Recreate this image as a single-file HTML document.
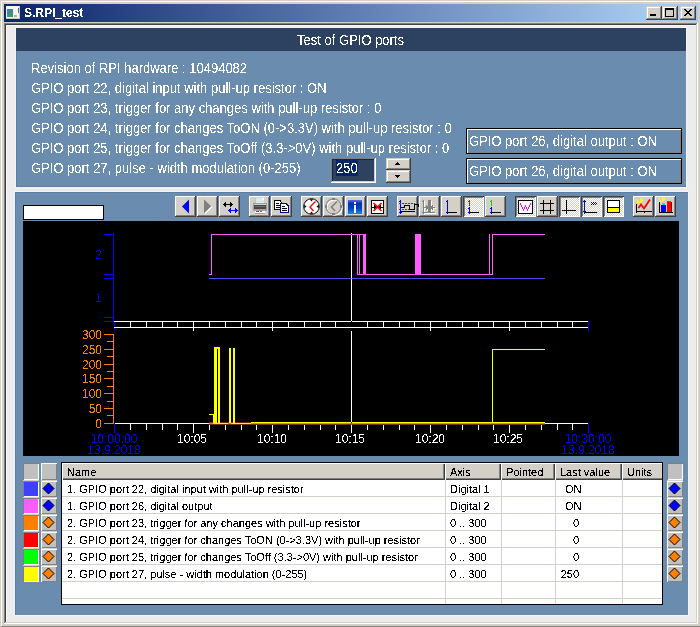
<!DOCTYPE html>
<html><head><meta charset="utf-8">
<style>
html,body{margin:0;padding:0;width:700px;height:627px;overflow:hidden;background:#d4d0c8;}
body{position:relative;font-family:"Liberation Sans",sans-serif;}
.a{position:absolute;}
.t{position:absolute;white-space:nowrap;line-height:20px;filter:url(#crisp);}
.btn{background:#d4d0c8;box-shadow:inset -1px -1px #404040,inset 1px 1px #fff,inset -2px -2px #808080;}
.obox{box-sizing:border-box;border:1px solid #000;box-shadow:inset 1px 1px #fff,inset -1px -1px #808080;}
.pbtn{background-color:#e8e6e2;background-image:repeating-conic-gradient(#fff 0 25%,#d4d0c8 0 50%);background-size:2px 2px;box-shadow:inset 1px 1px #404040,inset -1px -1px #fff,inset 2px 2px #808080;}
.cl{font-size:12px;line-height:20px;}
.sunk{box-sizing:border-box;box-shadow:inset 1px 1px #808080,inset -1px -1px #fff;}
.rais{box-sizing:border-box;box-shadow:inset 1px 1px #fff,inset -1px -1px #808080;}
.hcell{box-sizing:border-box;background:#d4d0c8;box-shadow:inset 1px 1px #fff,inset -1px -1px #404040,inset -2px -2px #808080;}
.tb{font-size:11px;line-height:17px;color:#000;margin-top:1px;margin-left:-1px;filter:url(#crisp45);}
.cbtn{background:#d4d0c8;box-shadow:inset -1px -1px #404040,inset 1px 1px #d4d0c8,inset -2px -2px #808080,inset 2px 2px #fff;}
.sx{display:inline-block;transform:scaleX(0.9286);}
</style></head><body><svg width="0" height="0" style="position:absolute"><filter id="crisp" x="0" y="0" width="100%" height="100%"><feComponentTransfer><feFuncA type="discrete" tableValues="0 1"/></feComponentTransfer></filter><filter id="crisp45" x="0" y="0" width="100%" height="100%"><feComponentTransfer><feFuncA type="discrete" tableValues="0 0 0 0 0 0 0 0 0 1 1 1 1 1 1 1 1 1 1 1"/></feComponentTransfer></filter></svg>
<!-- window frame -->
<div class="a" style="left:1px;top:1px;width:699px;height:1px;background:#fff"></div>
<div class="a" style="left:1px;top:1px;width:1px;height:625px;background:#fff"></div>
<div class="a" style="left:1px;top:626px;width:699px;height:1px;background:#808080"></div>
<!-- title bar -->
<div class="a" style="left:4px;top:4px;width:694px;height:18px;background:linear-gradient(to right,#0a246a,#a6caf0 93%)"></div>
<div class="t" style="left:24px;top:3px;font-size:12px;font-weight:bold;color:#fff;filter:url(#crisp45)">S.RPI_test</div>
<!-- client edge -->
<div class="a" style="left:4px;top:23px;width:694px;height:601px;background:#fff"></div>
<div class="a" style="left:4px;top:23px;width:693px;height:600px;background:#808080"></div>
<div class="a" style="left:5px;top:24px;width:692px;height:599px;background:#d4d0c8"></div>
<div class="a" style="left:5px;top:24px;width:691px;height:598px;background:#404040"></div>
<div class="a" style="left:6px;top:25px;width:690px;height:597px;background:#f8f8f8"></div>
<div class="a" style="left:7px;top:26px;width:689px;height:596px;background:#ececec"></div>

<!-- panel 1 -->
<div class="a" style="left:16px;top:28px;width:670px;height:159px;background:#698caf;box-shadow:inset 1px -1px #5a7ea6,0 0 0 1px #f6f4f2"></div>
<div class="a" style="left:16px;top:28px;width:670px;height:23px;background:#2c4260"></div>
<div class="t" style="left:16px;width:670px;text-align:center;top:30px;font-size:14px;color:#fff"><span class="sx" style="transform-origin:50% 0">Test of GPIO ports</span></div>
<div class="t" style="left:31px;top:58px;font-size:14px;color:#fff"><span class="sx" style="transform-origin:0 0">Revision of RPI hardware : 10494082</span></div>
<div class="t" style="left:31px;top:78px;font-size:14px;color:#fff"><span class="sx" style="transform-origin:0 0">GPIO port 22, digital input with pull-up resistor : ON</span></div>
<div class="t" style="left:31px;top:98px;font-size:14px;color:#fff"><span class="sx" style="transform-origin:0 0">GPIO port 23, trigger for any changes with pull-up resistor : 0</span></div>
<div class="t" style="left:31px;top:118px;font-size:14px;color:#fff"><span class="sx" style="transform-origin:0 0">GPIO port 24, trigger for changes ToON (0-&gt;3.3V) with pull-up resistor : 0</span></div>
<div class="t" style="left:31px;top:138px;font-size:14px;color:#fff"><span class="sx" style="transform-origin:0 0">GPIO port 25, trigger for changes ToOff (3.3-&gt;0V) with pull-up resistor : 0</span></div>
<div class="t" style="left:31px;top:158px;font-size:14px;color:#fff"><span class="sx" style="transform-origin:0 0">GPIO port 27, pulse - width modulation (0-255)</span></div>


<!-- title icon -->
<div class="a" style="left:6px;top:6px;width:14px;height:13px;background:#f4f4f0;box-shadow:inset -1px -1px #c8c8c0"></div>
<div class="a" style="left:7px;top:9px;width:6px;height:8px;background:linear-gradient(#4a7ab0,#3aa060)"></div>
<div class="a" style="left:18px;top:8px;width:1px;height:5px;background:linear-gradient(#3060c0,#30a050)"></div>
<div class="a" style="left:14px;top:15px;width:3px;height:2px;background:#b0b0b0"></div>
<!-- title buttons -->
<div class="a cbtn" style="left:646px;top:6px;width:16px;height:14px"><div class="a" style="left:4px;top:8px;width:6px;height:2px;background:#000"></div></div>
<div class="a cbtn" style="left:662px;top:6px;width:16px;height:14px"><div class="a" style="left:3px;top:2px;width:9px;height:9px;box-sizing:border-box;border:1px solid #000;border-top-width:2px"></div></div>
<div class="a cbtn" style="left:680px;top:6px;width:16px;height:14px"><svg class="a" style="left:0;top:0" width="16" height="14" shape-rendering="crispEdges"><path d="M4 3h2v1h1v1h2v-1h1v-1h2v1h-1v1h-1v1h-1v1h1v1h1v1h1v1h-2v-1h-1v-1h-2v1h-1v1h-2v-1h1v-1h1v-1h1v-1h-1v-1h-1v-1h-1z" fill="#000"/></svg></div>
<!-- right boxes -->
<div class="a obox" style="left:466px;top:128px;width:216px;height:26px"></div>
<div class="t" style="left:469px;top:131px;font-size:14px;color:#fff"><span class="sx" style="transform-origin:0 0">GPIO port 26, digital output : ON</span></div>
<div class="a obox" style="left:466px;top:158px;width:216px;height:26px"></div>
<div class="t" style="left:469px;top:161px;font-size:14px;color:#fff"><span class="sx" style="transform-origin:0 0">GPIO port 26, digital output : ON</span></div>
<!-- spin edit -->
<div class="a" style="left:331px;top:158px;width:45px;height:25px;background:#fff"></div>
<div class="a" style="left:331px;top:158px;width:44px;height:24px;background:#808080"></div>
<div class="a" style="left:332px;top:159px;width:43px;height:23px;background:#d4d0c8"></div>
<div class="a" style="left:332px;top:159px;width:42px;height:22px;background:#1c2438"></div>
<div class="a" style="left:333px;top:160px;width:41px;height:21px;background:#2c4260"></div>
<div class="a" style="left:336px;top:160px;width:22px;height:16px;background:#0a246a"></div>
<div class="t" style="left:336px;top:158px;font-size:14px;line-height:20px;color:#fff"><span class="sx" style="transform-origin:0 0">250</span></div>
<div class="a cbtn" style="left:386px;top:158px;width:25px;height:12px"></div>
<div class="a cbtn" style="left:386px;top:170px;width:25px;height:13px"></div>
<svg class="a" style="left:386px;top:158px" width="25" height="25" shape-rendering="crispEdges"><rect x="11" y="4" width="1" height="1"/><rect x="10" y="5" width="3" height="1"/><rect x="9" y="6" width="5" height="1"/><rect x="9" y="17" width="5" height="1"/><rect x="10" y="18" width="3" height="1"/><rect x="11" y="19" width="1" height="1"/></svg>
<!-- panel 2 -->
<div class="a" style="left:15px;top:192px;width:673px;height:423px;background:#698caf;box-shadow:inset 1px 1px #5a7ea6,0 0 0 1px #f6f4f2"></div>
<div class="a btn" style="left:175px;top:196px;width:21px;height:21px"></div>
<div class="a btn" style="left:197px;top:196px;width:21px;height:21px"></div>
<div class="a btn" style="left:219px;top:196px;width:21px;height:21px"></div>
<div class="a btn" style="left:249px;top:196px;width:21px;height:21px"></div>
<div class="a btn" style="left:271px;top:196px;width:21px;height:21px"></div>
<div class="a btn" style="left:301px;top:196px;width:21px;height:21px"></div>
<div class="a btn" style="left:323px;top:196px;width:21px;height:21px"></div>
<div class="a btn" style="left:345px;top:196px;width:21px;height:21px"></div>
<div class="a btn" style="left:367px;top:196px;width:21px;height:21px"></div>
<div class="a btn" style="left:397px;top:196px;width:21px;height:21px"></div>
<div class="a btn" style="left:419px;top:196px;width:21px;height:21px"></div>
<div class="a btn" style="left:441px;top:196px;width:21px;height:21px"></div>
<div class="a pbtn" style="left:463px;top:196px;width:21px;height:21px"></div>
<div class="a btn" style="left:485px;top:196px;width:21px;height:21px"></div>
<div class="a pbtn" style="left:515px;top:196px;width:21px;height:21px"></div>
<div class="a btn" style="left:537px;top:196px;width:21px;height:21px"></div>
<div class="a pbtn" style="left:559px;top:196px;width:21px;height:21px"></div>
<div class="a pbtn" style="left:581px;top:196px;width:21px;height:21px"></div>
<div class="a pbtn" style="left:603px;top:196px;width:21px;height:21px"></div>
<div class="a btn" style="left:633px;top:196px;width:21px;height:21px"></div>
<div class="a btn" style="left:655px;top:196px;width:21px;height:21px"></div>
<svg class="a" style="left:170px;top:194px" width="510" height="26" viewBox="170 194 510 26" shape-rendering="crispEdges">
<!-- prev -->
<path d="M182 206.5L189 199.5V213.5Z" fill="#0000ff" shape-rendering="geometricPrecision"/>
<!-- next disabled -->
<path d="M204 199.5L211.5 206.5L204 213.5Z" fill="#808080" shape-rendering="geometricPrecision"/>
<path d="M205 213.5L212 206.5" stroke="#fff" stroke-width="1.2" shape-rendering="geometricPrecision"/>
<!-- arrows -->
<rect x="223" y="204" width="10" height="1" fill="#000"/><rect x="224" y="203" width="1" height="3" fill="#000"/><rect x="231" y="203" width="1" height="3" fill="#000"/><rect x="225" y="202" width="1" height="5" fill="#000"/><rect x="230" y="202" width="1" height="5" fill="#000"/>
<rect x="228" y="210" width="10" height="1" fill="#0000ff"/><rect x="229" y="209" width="1" height="3" fill="#0000ff"/><rect x="236" y="209" width="1" height="3" fill="#0000ff"/><rect x="230" y="208" width="1" height="5" fill="#0000ff"/><rect x="235" y="208" width="1" height="5" fill="#0000ff"/>
<!-- printer -->
<rect x="255" y="198" width="9" height="6" fill="#d8ecec"/><rect x="255" y="198" width="1" height="6" fill="#b0c8c8"/><path d="M261 198h3v3z" fill="#fff"/>
<rect x="253" y="203" width="14" height="8" fill="#a0a0a0"/>
<rect x="254" y="204" width="12" height="1" fill="#d0d0d0"/>
<rect x="254" y="205" width="12" height="4" fill="#484848"/>
<rect x="255" y="206" width="10" height="1" fill="#707070"/>
<rect x="252" y="205" width="1" height="5" fill="#c8c8c8"/><rect x="267" y="205" width="1" height="5" fill="#c8c8c8"/>
<rect x="266" y="207" width="1" height="1" fill="#20e020"/>
<rect x="255" y="211" width="10" height="2" fill="#ffffff"/><rect x="255" y="213" width="10" height="1" fill="#a0a0a0"/>
<rect x="256" y="211" width="3" height="1" fill="#2070e0"/><rect x="260" y="211" width="2" height="1" fill="#20a060"/>
<!-- copy -->
<rect x="274" y="200" width="7" height="10" fill="#000"/><rect x="281" y="202" width="1" height="8" fill="#000"/><rect x="280" y="201" width="1" height="1" fill="#000"/>
<rect x="275" y="201" width="5" height="8" fill="#fff"/><rect x="280" y="202" width="1" height="7" fill="#fff"/>
<rect x="276" y="203" width="3" height="1" fill="#000"/><rect x="276" y="205" width="4" height="1" fill="#000"/><rect x="276" y="207" width="4" height="1" fill="#000"/>
<rect x="280" y="203" width="7" height="10" fill="#000080"/><rect x="287" y="205" width="2" height="8" fill="#000080"/><rect x="287" y="204" width="1" height="1" fill="#000080"/>
<rect x="281" y="204" width="5" height="8" fill="#fff"/><rect x="286" y="205" width="1" height="7" fill="#fff"/><rect x="287" y="206" width="1" height="6" fill="#fff"/>
<rect x="282" y="206" width="3" height="1" fill="#000"/><rect x="282" y="208" width="5" height="1" fill="#000"/><rect x="282" y="210" width="5" height="1" fill="#000"/>
<!-- clock -->
<g shape-rendering="geometricPrecision">
<circle cx="311.5" cy="206.5" r="7.8" fill="#fff" stroke="#000" stroke-width="1"/>
<path d="M311.5 201.5l-1.7 -2.3h3.4zM311.5 211.5l-1.7 2.3h3.4zM306.5 206.5l-2.3 -1.7v3.4zM316.5 206.5l2.3 -1.7v3.4z" fill="#000"/>
<path d="M315.5 201.5L310 207L313.5 211" stroke="#ff0000" stroke-width="1.4" fill="none"/>
<circle cx="334.5" cy="207.5" r="7.6" fill="none" stroke="#fff" stroke-width="1.4"/><circle cx="333.5" cy="206.5" r="7.6" fill="none" stroke="#909090" stroke-width="1.4"/>
<path d="M337 201.5L331.5 207L335 211" stroke="#808080" stroke-width="1.6" fill="none"/>
<rect x="332" y="198" width="3" height="2" fill="#808080"/><rect x="332" y="213" width="3" height="2" fill="#808080"/>
<rect x="325" y="205" width="2" height="3" fill="#808080"/><rect x="340" y="205" width="2" height="3" fill="#808080"/>
</g>
<!-- info -->
<defs><linearGradient id="ig" x1="0" y1="0" x2="0" y2="1"><stop offset="0" stop-color="#6070e0"/><stop offset="0.25" stop-color="#0030b0"/><stop offset="0.6" stop-color="#0040c0"/><stop offset="1" stop-color="#0090ff"/></linearGradient></defs>
<rect x="348" y="200" width="14" height="14" fill="url(#ig)"/>
<rect x="354" y="202" width="2" height="2" fill="#fff"/><rect x="354" y="205" width="2" height="8" fill="#fff"/>
<!-- X -->
<rect x="371" y="200" width="13" height="14" fill="#000"/><rect x="372" y="201" width="11" height="12" fill="#fff"/>
<rect x="372" y="207" width="11" height="1" fill="#000"/><path d="M374 204.5v5l3.5 -2.5zM381 204.5v5l-3.5 -2.5z" fill="#000" shape-rendering="geometricPrecision"/><path d="M373.5 203L381.5 211M381.5 203L373.5 211" stroke="#ff0000" stroke-width="1.6" shape-rendering="geometricPrecision"/>

<!-- 397 wave -->
<rect x="400" y="200" width="1" height="14" fill="#0000ff"/><rect x="399" y="201" width="1" height="1" fill="#0000ff"/><rect x="399" y="212" width="3" height="1" fill="#0000ff"/>
<path d="M399 203.5h16M399 209.5h16" stroke="#ff0000" stroke-dasharray="2 1"/>
<rect x="401" y="207" width="3" height="1" fill="#000"/><rect x="404" y="205" width="1" height="3" fill="#000"/><rect x="404" y="205" width="5" height="1" fill="#000"/><rect x="409" y="205" width="1" height="5" fill="#000"/><rect x="409" y="209" width="5" height="1" fill="#000"/><rect x="414" y="204" width="1" height="6" fill="#000"/><rect x="414" y="204" width="4" height="1" fill="#000"/><rect x="418" y="204" width="1" height="3" fill="#000"/>
<rect x="400" y="211" width="15" height="1" fill="#000"/>
<!-- 419 disabled -->
<rect x="424" y="201" width="1" height="14" fill="#ffffff"/><rect x="423" y="202" width="1" height="1" fill="#ffffff"/><rect x="423" y="213" width="3" height="1" fill="#ffffff"/><rect x="424" y="213" width="12" height="1" fill="#ffffff"/><rect x="429" y="201" width="3" height="12" fill="#ffffff"/><rect x="425" y="208" width="4" height="1" fill="#ffffff"/><rect x="432" y="208" width="4" height="1" fill="#ffffff"/><rect x="427" y="206" width="1" height="5" fill="#ffffff"/><rect x="428" y="207" width="1" height="3" fill="#ffffff"/><rect x="433" y="206" width="1" height="5" fill="#ffffff"/><rect x="432" y="207" width="1" height="3" fill="#ffffff"/><rect x="423" y="200" width="1" height="14" fill="#808080"/><rect x="422" y="201" width="1" height="1" fill="#808080"/><rect x="422" y="212" width="3" height="1" fill="#808080"/><rect x="423" y="212" width="12" height="1" fill="#808080"/><rect x="428" y="200" width="3" height="12" fill="#808080"/><rect x="424" y="207" width="4" height="1" fill="#808080"/><rect x="431" y="207" width="4" height="1" fill="#808080"/><rect x="426" y="205" width="1" height="5" fill="#808080"/><rect x="427" y="206" width="1" height="3" fill="#808080"/><rect x="432" y="205" width="1" height="5" fill="#808080"/><rect x="431" y="206" width="1" height="3" fill="#808080"/>
<!-- 441 -->
<rect x="447" y="200" width="1" height="14" fill="#0000ff"/><rect x="446" y="201" width="1" height="1" fill="#0000ff"/><rect x="446" y="212" width="3" height="1" fill="#0000ff"/><rect x="448" y="212" width="9" height="1" fill="#000"/>
<rect x="469" y="200" width="1" height="6" fill="#ff0000"/><rect x="468" y="201" width="1" height="1" fill="#ff0000"/><rect x="469" y="207" width="1" height="7" fill="#0000ff"/><rect x="468" y="208" width="1" height="1" fill="#0000ff"/><rect x="468" y="212" width="3" height="1" fill="#0000ff"/><rect x="470" y="212" width="9" height="1" fill="#000"/>
<rect x="491" y="200" width="1" height="6" fill="#00e000"/><rect x="490" y="201" width="1" height="1" fill="#00e000"/><rect x="491" y="207" width="1" height="7" fill="#0000ff"/><rect x="490" y="208" width="1" height="1" fill="#0000ff"/><rect x="490" y="212" width="3" height="1" fill="#0000ff"/><rect x="492" y="212" width="9" height="1" fill="#000"/>
<!-- W -->
<rect x="518" y="200" width="15" height="14" fill="#000"/><rect x="519" y="201" width="13" height="12" fill="#fff"/>
<path d="M520 203h1v2h1v2h1v2h1v-2h1v-2h1v2h1v2h1v-2h1v-2h1v-2h1v-1h-1v1" fill="none" stroke="none"/>
<rect x="520" y="203" width="1" height="2" fill="#ff00ff"/><rect x="521" y="205" width="1" height="2" fill="#ff00ff"/><rect x="522" y="207" width="1" height="2" fill="#ff00ff"/><rect x="523" y="209" width="1" height="2" fill="#ff00ff"/>
<rect x="524" y="207" width="1" height="2" fill="#ff00ff"/><rect x="525" y="205" width="1" height="2" fill="#ff00ff"/><rect x="526" y="207" width="1" height="2" fill="#ff00ff"/><rect x="527" y="209" width="1" height="2" fill="#ff00ff"/>
<rect x="528" y="207" width="1" height="2" fill="#ff00ff"/><rect x="529" y="205" width="1" height="2" fill="#ff00ff"/><rect x="530" y="203" width="1" height="2" fill="#ff00ff"/>
<!-- # -->
<rect x="543" y="200" width="1" height="14" fill="#000"/><rect x="550" y="200" width="1" height="14" fill="#000"/>
<rect x="540" y="203" width="14" height="1" fill="#000"/><rect x="540" y="210" width="14" height="1" fill="#000"/>

<!-- perp -->
<rect x="566" y="200" width="1" height="14" fill="#000"/><rect x="562" y="210" width="14" height="1" fill="#000"/>
<!-- axis 581 -->
<rect x="584" y="200" width="1" height="14" fill="#0000ff"/><rect x="583" y="201" width="3" height="1" fill="#0000ff"/><rect x="583" y="211" width="3" height="1" fill="#0000ff"/>
<rect x="585" y="212" width="12" height="1" fill="#000"/>
<rect x="591" y="202" width="1" height="1" fill="#0000ff"/><rect x="593" y="202" width="1" height="1" fill="#0000ff"/><rect x="595" y="202" width="1" height="1" fill="#0000ff"/><rect x="592" y="203" width="1" height="1" fill="#0000ff"/><rect x="594" y="203" width="1" height="1" fill="#0000ff"/><rect x="596" y="203" width="1" height="1" fill="#0000ff"/><rect x="591" y="204" width="1" height="1" fill="#0000ff"/><rect x="593" y="204" width="1" height="1" fill="#0000ff"/><rect x="595" y="204" width="1" height="1" fill="#0000ff"/>
<!-- yellow 603 -->
<rect x="607" y="200" width="13" height="13" fill="#000"/><rect x="608" y="201" width="11" height="6" fill="#fff"/><rect x="608" y="208" width="11" height="4" fill="#ffff00"/>
<!-- chart 633 -->
<rect x="636" y="204" width="1" height="9" fill="#000"/><rect x="636" y="211" width="16" height="1" fill="#000"/><rect x="644" y="212" width="1" height="1" fill="#000"/>
<path d="M638.5 208L641 204.5L644 208.5L650 199.5" stroke="#ff0000" stroke-width="1.8" fill="none" shape-rendering="geometricPrecision"/>
<path d="M636 199l4 4M640 198v4M637 202h4M643 199l-2 3" stroke="#ffff00" fill="none"/>
<!-- bar 655 -->
<rect x="659" y="201" width="1" height="12" fill="#000"/><rect x="659" y="212" width="14" height="1" fill="#000"/>
<rect x="661" y="205" width="5" height="7" fill="#0000ff"/><rect x="667" y="202" width="4" height="10" fill="#ff0000"/><rect x="667" y="201" width="4" height="1" fill="#ff00ff"/><rect x="671" y="202" width="1" height="10" fill="#800000"/>
<path d="M658 198l4 4M662 197v4M659 201h4M665 198l-2 3" stroke="#ffff00" fill="none"/><rect x="662" y="203" width="3" height="2" fill="#00e0e0"/>
</svg>
<!-- white box -->
<div class="a" style="left:23px;top:205px;width:81px;height:15px;box-sizing:border-box;border:1px solid #000;background:#fff"></div>
<div class="a" style="left:23px;top:221px;width:656px;height:235px;background:#000"></div>
<svg class="a" style="left:23px;top:221px" width="656" height="235" viewBox="23 221 656 235" shape-rendering="crispEdges"><rect x="113" y="233" width="1" height="89" fill="#0000ff"/><rect x="114" y="321" width="1" height="10" fill="#0000ff"/><rect x="104" y="234" width="9" height="1" fill="#0000ff"/><rect x="104" y="274" width="9" height="1" fill="#0000ff"/><rect x="104" y="278" width="9" height="1" fill="#0000ff"/><rect x="104" y="317" width="9" height="1" fill="#0000ff"/><rect x="104" y="321" width="9" height="1" fill="#0000ff"/><rect x="114" y="321" width="475" height="1" fill="#ffffff"/><rect x="114" y="327" width="475" height="1" fill="#ffffff"/><rect x="130" y="321" width="1" height="7" fill="#ffffff"/><rect x="146" y="321" width="1" height="7" fill="#ffffff"/><rect x="162" y="321" width="1" height="7" fill="#ffffff"/><rect x="177" y="321" width="1" height="7" fill="#ffffff"/><rect x="193" y="321" width="1" height="10" fill="#ffffff"/><rect x="209" y="321" width="1" height="7" fill="#ffffff"/><rect x="225" y="321" width="1" height="7" fill="#ffffff"/><rect x="241" y="321" width="1" height="7" fill="#ffffff"/><rect x="256" y="321" width="1" height="7" fill="#ffffff"/><rect x="272" y="321" width="1" height="10" fill="#ffffff"/><rect x="288" y="321" width="1" height="7" fill="#ffffff"/><rect x="304" y="321" width="1" height="7" fill="#ffffff"/><rect x="320" y="321" width="1" height="7" fill="#ffffff"/><rect x="335" y="321" width="1" height="7" fill="#ffffff"/><rect x="351" y="321" width="1" height="10" fill="#ffffff"/><rect x="367" y="321" width="1" height="7" fill="#ffffff"/><rect x="383" y="321" width="1" height="7" fill="#ffffff"/><rect x="399" y="321" width="1" height="7" fill="#ffffff"/><rect x="414" y="321" width="1" height="7" fill="#ffffff"/><rect x="430" y="321" width="1" height="10" fill="#ffffff"/><rect x="446" y="321" width="1" height="7" fill="#ffffff"/><rect x="462" y="321" width="1" height="7" fill="#ffffff"/><rect x="478" y="321" width="1" height="7" fill="#ffffff"/><rect x="493" y="321" width="1" height="7" fill="#ffffff"/><rect x="509" y="321" width="1" height="10" fill="#ffffff"/><rect x="525" y="321" width="1" height="7" fill="#ffffff"/><rect x="541" y="321" width="1" height="7" fill="#ffffff"/><rect x="557" y="321" width="1" height="7" fill="#ffffff"/><rect x="572" y="321" width="1" height="7" fill="#ffffff"/><rect x="588" y="321" width="1" height="10" fill="#0000ff"/><rect x="113" y="334" width="1" height="90" fill="#ff8000"/><rect x="104" y="334" width="9" height="1" fill="#ff8000"/><rect x="107" y="341" width="6" height="1" fill="#ff8000"/><rect x="104" y="349" width="9" height="1" fill="#ff8000"/><rect x="107" y="356" width="6" height="1" fill="#ff8000"/><rect x="104" y="364" width="9" height="1" fill="#ff8000"/><rect x="107" y="371" width="6" height="1" fill="#ff8000"/><rect x="104" y="378" width="9" height="1" fill="#ff8000"/><rect x="107" y="386" width="6" height="1" fill="#ff8000"/><rect x="104" y="393" width="9" height="1" fill="#ff8000"/><rect x="107" y="401" width="6" height="1" fill="#ff8000"/><rect x="104" y="408" width="9" height="1" fill="#ff8000"/><rect x="107" y="415" width="6" height="1" fill="#ff8000"/><rect x="104" y="423" width="9" height="1" fill="#ff8000"/><rect x="114" y="423" width="475" height="1" fill="#ffffff"/><rect x="130" y="424" width="1" height="6" fill="#ffffff"/><rect x="146" y="424" width="1" height="6" fill="#ffffff"/><rect x="162" y="424" width="1" height="6" fill="#ffffff"/><rect x="177" y="424" width="1" height="6" fill="#ffffff"/><rect x="193" y="424" width="1" height="9" fill="#ffffff"/><rect x="209" y="424" width="1" height="6" fill="#ffffff"/><rect x="225" y="424" width="1" height="6" fill="#ffffff"/><rect x="241" y="424" width="1" height="6" fill="#ffffff"/><rect x="256" y="424" width="1" height="6" fill="#ffffff"/><rect x="272" y="424" width="1" height="9" fill="#ffffff"/><rect x="288" y="424" width="1" height="6" fill="#ffffff"/><rect x="304" y="424" width="1" height="6" fill="#ffffff"/><rect x="320" y="424" width="1" height="6" fill="#ffffff"/><rect x="335" y="424" width="1" height="6" fill="#ffffff"/><rect x="351" y="424" width="1" height="9" fill="#ffffff"/><rect x="367" y="424" width="1" height="6" fill="#ffffff"/><rect x="383" y="424" width="1" height="6" fill="#ffffff"/><rect x="399" y="424" width="1" height="6" fill="#ffffff"/><rect x="414" y="424" width="1" height="6" fill="#ffffff"/><rect x="430" y="424" width="1" height="9" fill="#ffffff"/><rect x="446" y="424" width="1" height="6" fill="#ffffff"/><rect x="462" y="424" width="1" height="6" fill="#ffffff"/><rect x="478" y="424" width="1" height="6" fill="#ffffff"/><rect x="493" y="424" width="1" height="6" fill="#ffffff"/><rect x="509" y="424" width="1" height="9" fill="#ffffff"/><rect x="525" y="424" width="1" height="6" fill="#ffffff"/><rect x="541" y="424" width="1" height="6" fill="#ffffff"/><rect x="557" y="424" width="1" height="6" fill="#ffffff"/><rect x="572" y="424" width="1" height="6" fill="#ffffff"/><rect x="114" y="423" width="1" height="10" fill="#0000ff"/><rect x="588" y="423" width="1" height="10" fill="#0000ff"/><rect x="351" y="233" width="1" height="88" fill="#ffffff"/><rect x="351" y="327" width="1" height="1" fill="#ffffff"/><rect x="351" y="331" width="1" height="91" fill="#ffffff"/><rect x="209" y="274" width="3" height="1" fill="#ff5cff"/><rect x="211" y="234" width="1" height="41" fill="#ff5cff"/><rect x="211" y="234" width="155" height="1" fill="#ff5cff"/><rect x="357" y="234" width="1" height="41" fill="#ff5cff"/><rect x="359" y="234" width="1" height="41" fill="#ff5cff"/><rect x="363" y="234" width="3" height="41" fill="#ff5cff"/><rect x="357" y="274" width="136" height="1" fill="#ff5cff"/><rect x="415" y="234" width="6" height="41" fill="#ff5cff"/><rect x="489" y="234" width="1" height="41" fill="#ff5cff"/><rect x="492" y="234" width="1" height="41" fill="#ff5cff"/><rect x="492" y="234" width="53" height="1" fill="#ff5cff"/><rect x="209" y="278" width="336" height="1" fill="#4848ff"/><rect x="351" y="234" width="1" height="1" fill="#00c000"/><rect x="351" y="278" width="1" height="1" fill="#c0c000"/><rect x="209" y="422" width="336" height="1" fill="#702800"/><rect x="209" y="424" width="336" height="1" fill="#703000"/><rect x="209" y="423" width="42" height="1" fill="#ffff00"/><rect x="251" y="422" width="294" height="1" fill="#ffff00"/><rect x="251" y="423" width="294" height="1" fill="#00ff00"/><rect x="209" y="423" width="4" height="1" fill="#00ff00"/><rect x="228" y="423" width="3" height="1" fill="#00ff00"/><rect x="209" y="414" width="5" height="1" fill="#ffff00"/><rect x="213" y="414" width="1" height="9" fill="#ffff00"/><rect x="214" y="347" width="3" height="76" fill="#ffff00"/><rect x="214" y="347" width="6" height="2" fill="#ffff00"/><rect x="218" y="347" width="2" height="76" fill="#ffff00"/><rect x="229" y="348" width="2" height="75" fill="#ffff00"/><rect x="233" y="348" width="2" height="75" fill="#ffff00"/><rect x="492" y="349" width="1" height="74" fill="#ffff00"/><rect x="492" y="349" width="53" height="1" fill="#ffff00"/><rect x="351" y="321" width="1" height="6" fill="#000"/><rect x="351" y="327" width="1" height="1" fill="#fff"/><rect x="351" y="328" width="1" height="3" fill="#000"/><rect x="351" y="234" width="1" height="1" fill="#00a300"/><rect x="351" y="278" width="1" height="1" fill="#b7b700"/><rect x="351" y="422" width="1" height="1" fill="#0000ff"/><rect x="351" y="423" width="1" height="1" fill="#ff00ff"/><rect x="351" y="424" width="1" height="1" fill="#4f8f9f"/></svg>
<div class="t cl" style="left:60px;width:42px;text-align:right;top:245px;color:#0000ff">2</div>
<div class="t cl" style="left:60px;width:42px;text-align:right;top:288px;color:#0000ff">1</div>
<div class="t cl" style="left:60px;width:42px;text-align:right;top:325px;color:#ff8000">300</div>
<div class="t cl" style="left:60px;width:42px;text-align:right;top:340px;color:#ff8000">250</div>
<div class="t cl" style="left:60px;width:42px;text-align:right;top:355px;color:#ff8000">200</div>
<div class="t cl" style="left:60px;width:42px;text-align:right;top:369px;color:#ff8000">150</div>
<div class="t cl" style="left:60px;width:42px;text-align:right;top:384px;color:#ff8000">100</div>
<div class="t cl" style="left:60px;width:42px;text-align:right;top:399px;color:#ff8000">50</div>
<div class="t cl" style="left:60px;width:42px;text-align:right;top:414px;color:#ff8000">0</div>
<div class="t cl" style="left:162px;width:60px;text-align:center;top:429px;color:#fff">10:05</div>
<div class="t cl" style="left:242px;width:60px;text-align:center;top:429px;color:#fff">10:10</div>
<div class="t cl" style="left:320px;width:60px;text-align:center;top:429px;color:#fff">10:15</div>
<div class="t cl" style="left:400px;width:60px;text-align:center;top:429px;color:#fff">10:20</div>
<div class="t cl" style="left:478px;width:60px;text-align:center;top:429px;color:#fff">10:25</div>
<div class="t cl" style="left:74px;width:80px;text-align:center;top:429px;color:#0000ff">10:00:00</div>
<div class="t cl" style="left:74px;width:80px;text-align:center;top:440px;color:#0000ff">13.9.2018</div>
<div class="t cl" style="left:548px;width:80px;text-align:center;top:429px;color:#0000ff">10:30:00</div>
<div class="t cl" style="left:548px;width:80px;text-align:center;top:440px;color:#0000ff">13.9.2018</div>

<div class="a" style="left:61px;top:462px;width:602px;height:143px;background:#fff;box-sizing:border-box;border:1px solid #000"></div>
<div class="a hcell" style="left:62px;top:463px;width:383px;height:17px"></div>
<div class="t tb" style="left:68px;top:463px">Name</div>
<div class="a hcell" style="left:445px;top:463px;width:56px;height:17px"></div>
<div class="t tb" style="left:451px;top:463px">Axis</div>
<div class="a hcell" style="left:501px;top:463px;width:54px;height:17px"></div>
<div class="t tb" style="left:507px;top:463px">Pointed</div>
<div class="a hcell" style="left:555px;top:463px;width:67px;height:17px"></div>
<div class="t tb" style="left:561px;top:463px">Last value</div>
<div class="a hcell" style="left:622px;top:463px;width:40px;height:17px;box-shadow:inset 1px 1px #fff,inset 0 -1px #404040,inset 0 -2px #808080"></div>
<div class="t tb" style="left:628px;top:463px">Units</div>
<div class="a" style="left:445px;top:480px;width:1px;height:124px;background:#d4d0c8"></div>
<div class="a" style="left:501px;top:480px;width:1px;height:124px;background:#d4d0c8"></div>
<div class="a" style="left:555px;top:480px;width:1px;height:124px;background:#d4d0c8"></div>
<div class="a" style="left:622px;top:480px;width:1px;height:124px;background:#d4d0c8"></div>
<div class="a" style="left:62px;top:496px;width:600px;height:1px;background:#d4d0c8"></div>
<div class="a" style="left:62px;top:513px;width:600px;height:1px;background:#d4d0c8"></div>
<div class="a" style="left:62px;top:530px;width:600px;height:1px;background:#d4d0c8"></div>
<div class="a" style="left:62px;top:547px;width:600px;height:1px;background:#d4d0c8"></div>
<div class="a" style="left:62px;top:564px;width:600px;height:1px;background:#d4d0c8"></div>
<div class="a" style="left:62px;top:581px;width:600px;height:1px;background:#d4d0c8"></div>
<div class="a" style="left:62px;top:598px;width:600px;height:1px;background:#d4d0c8"></div>
<div class="t tb" style="left:68px;top:480px">1. GPIO port 22, digital input with pull-up resistor</div>
<div class="t tb" style="left:451px;top:480px">Digital 1</div>
<div class="t tb" style="left:566px;top:480px">ON</div>
<div class="t tb" style="left:68px;top:497px">1. GPIO port 26, digital output</div>
<div class="t tb" style="left:451px;top:497px">Digital 2</div>
<div class="t tb" style="left:566px;top:497px">ON</div>
<div class="t tb" style="left:68px;top:514px">2. GPIO port 23, trigger for any changes with pull-up resistor</div>
<div class="t tb" style="left:451px;top:514px">0 .. 300</div>
<div class="t tb" style="left:530px;width:50px;text-align:right;top:514px">0</div>
<div class="t tb" style="left:68px;top:531px">2. GPIO port 24, trigger for changes ToON (0-&gt;3.3V) with pull-up resistor</div>
<div class="t tb" style="left:451px;top:531px">0 .. 300</div>
<div class="t tb" style="left:530px;width:50px;text-align:right;top:531px">0</div>
<div class="t tb" style="left:68px;top:548px">2. GPIO port 25, trigger for changes ToOff (3.3-&gt;0V) with pull-up resistor</div>
<div class="t tb" style="left:451px;top:548px">0 .. 300</div>
<div class="t tb" style="left:530px;width:50px;text-align:right;top:548px">0</div>
<div class="t tb" style="left:68px;top:565px">2. GPIO port 27, pulse - width modulation (0-255)</div>
<div class="t tb" style="left:451px;top:565px">0 .. 300</div>
<div class="t tb" style="left:530px;width:50px;text-align:right;top:565px">250</div>
<div class="a sunk" style="left:23px;top:463px;width:16px;height:17px;background:#c0c0c0"></div>
<div class="a rais" style="left:41px;top:463px;width:16px;height:17px;background:#c0c0c0"></div>
<div class="a sunk" style="left:667px;top:463px;width:16px;height:17px;background:#c0c0c0"></div>
<div class="a" style="left:23px;top:480px;width:16px;height:1px;background:#d4d0c8"></div>
<div class="a" style="left:41px;top:480px;width:16px;height:1px;background:#d4d0c8"></div>
<div class="a" style="left:667px;top:480px;width:16px;height:1px;background:#d4d0c8"></div>
<div class="a sunk" style="left:23px;top:481px;width:16px;height:16px;background:#4040ff"></div>
<div class="a rais" style="left:41px;top:481px;width:16px;height:16px;background:#c0c0c0"></div>
<svg class="a" style="left:42px;top:482px" width="13" height="13"><path d="M6.5 1L12 6.5L6.5 12L1 6.5Z" fill="#0000ff" stroke="#000" stroke-width="1"/></svg>
<div class="a rais" style="left:667px;top:481px;width:16px;height:16px;background:#c0c0c0"></div>
<svg class="a" style="left:668px;top:482px" width="13" height="13"><path d="M6.5 1L12 6.5L6.5 12L1 6.5Z" fill="#0000ff" stroke="#000" stroke-width="1"/></svg>
<div class="a" style="left:23px;top:497px;width:16px;height:1px;background:#d4d0c8"></div>
<div class="a" style="left:41px;top:497px;width:16px;height:1px;background:#d4d0c8"></div>
<div class="a" style="left:667px;top:497px;width:16px;height:1px;background:#d4d0c8"></div>
<div class="a sunk" style="left:23px;top:498px;width:16px;height:16px;background:#ff5cff"></div>
<div class="a rais" style="left:41px;top:498px;width:16px;height:16px;background:#c0c0c0"></div>
<svg class="a" style="left:42px;top:499px" width="13" height="13"><path d="M6.5 1L12 6.5L6.5 12L1 6.5Z" fill="#0000ff" stroke="#000" stroke-width="1"/></svg>
<div class="a rais" style="left:667px;top:498px;width:16px;height:16px;background:#c0c0c0"></div>
<svg class="a" style="left:668px;top:499px" width="13" height="13"><path d="M6.5 1L12 6.5L6.5 12L1 6.5Z" fill="#0000ff" stroke="#000" stroke-width="1"/></svg>
<div class="a" style="left:23px;top:514px;width:16px;height:1px;background:#d4d0c8"></div>
<div class="a" style="left:41px;top:514px;width:16px;height:1px;background:#d4d0c8"></div>
<div class="a" style="left:667px;top:514px;width:16px;height:1px;background:#d4d0c8"></div>
<div class="a sunk" style="left:23px;top:515px;width:16px;height:16px;background:#ff8000"></div>
<div class="a rais" style="left:41px;top:515px;width:16px;height:16px;background:#c0c0c0"></div>
<svg class="a" style="left:42px;top:516px" width="13" height="13"><path d="M6.5 1L12 6.5L6.5 12L1 6.5Z" fill="#ff8000" stroke="#000" stroke-width="1"/></svg>
<div class="a rais" style="left:667px;top:515px;width:16px;height:16px;background:#c0c0c0"></div>
<svg class="a" style="left:668px;top:516px" width="13" height="13"><path d="M6.5 1L12 6.5L6.5 12L1 6.5Z" fill="#ff8000" stroke="#000" stroke-width="1"/></svg>
<div class="a" style="left:23px;top:531px;width:16px;height:1px;background:#d4d0c8"></div>
<div class="a" style="left:41px;top:531px;width:16px;height:1px;background:#d4d0c8"></div>
<div class="a" style="left:667px;top:531px;width:16px;height:1px;background:#d4d0c8"></div>
<div class="a sunk" style="left:23px;top:532px;width:16px;height:16px;background:#ff0000"></div>
<div class="a rais" style="left:41px;top:532px;width:16px;height:16px;background:#c0c0c0"></div>
<svg class="a" style="left:42px;top:533px" width="13" height="13"><path d="M6.5 1L12 6.5L6.5 12L1 6.5Z" fill="#ff8000" stroke="#000" stroke-width="1"/></svg>
<div class="a rais" style="left:667px;top:532px;width:16px;height:16px;background:#c0c0c0"></div>
<svg class="a" style="left:668px;top:533px" width="13" height="13"><path d="M6.5 1L12 6.5L6.5 12L1 6.5Z" fill="#ff8000" stroke="#000" stroke-width="1"/></svg>
<div class="a" style="left:23px;top:548px;width:16px;height:1px;background:#d4d0c8"></div>
<div class="a" style="left:41px;top:548px;width:16px;height:1px;background:#d4d0c8"></div>
<div class="a" style="left:667px;top:548px;width:16px;height:1px;background:#d4d0c8"></div>
<div class="a sunk" style="left:23px;top:549px;width:16px;height:16px;background:#00ff00"></div>
<div class="a rais" style="left:41px;top:549px;width:16px;height:16px;background:#c0c0c0"></div>
<svg class="a" style="left:42px;top:550px" width="13" height="13"><path d="M6.5 1L12 6.5L6.5 12L1 6.5Z" fill="#ff8000" stroke="#000" stroke-width="1"/></svg>
<div class="a rais" style="left:667px;top:549px;width:16px;height:16px;background:#c0c0c0"></div>
<svg class="a" style="left:668px;top:550px" width="13" height="13"><path d="M6.5 1L12 6.5L6.5 12L1 6.5Z" fill="#ff8000" stroke="#000" stroke-width="1"/></svg>
<div class="a" style="left:23px;top:565px;width:16px;height:1px;background:#d4d0c8"></div>
<div class="a" style="left:41px;top:565px;width:16px;height:1px;background:#d4d0c8"></div>
<div class="a" style="left:667px;top:565px;width:16px;height:1px;background:#d4d0c8"></div>
<div class="a sunk" style="left:23px;top:566px;width:16px;height:16px;background:#ffff00"></div>
<div class="a rais" style="left:41px;top:566px;width:16px;height:16px;background:#c0c0c0"></div>
<svg class="a" style="left:42px;top:567px" width="13" height="13"><path d="M6.5 1L12 6.5L6.5 12L1 6.5Z" fill="#ff8000" stroke="#000" stroke-width="1"/></svg>
<div class="a rais" style="left:667px;top:566px;width:16px;height:16px;background:#c0c0c0"></div>
<svg class="a" style="left:668px;top:567px" width="13" height="13"><path d="M6.5 1L12 6.5L6.5 12L1 6.5Z" fill="#ff8000" stroke="#000" stroke-width="1"/></svg>
</body></html>
